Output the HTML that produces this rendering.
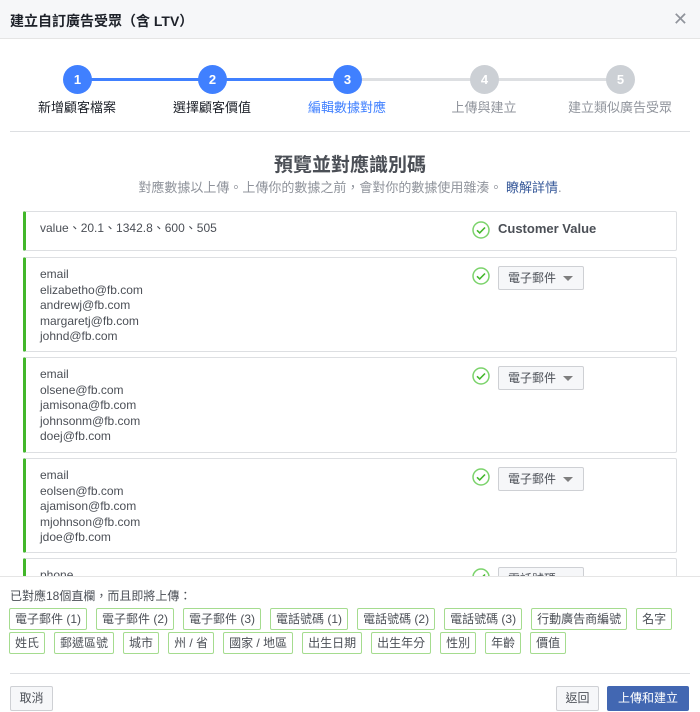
<!DOCTYPE html>
<html><head><meta charset="utf-8"><style>
*{box-sizing:border-box;margin:0;padding:0}
body{width:700px;height:712px;overflow:hidden;background:#fff;font-family:"Liberation Sans","Noto Sans CJK TC",sans-serif;color:#1d2129;position:relative}
.hdr{position:absolute;left:0;top:0;width:700px;height:39px;background:#f6f7f9;border-bottom:1px solid #e5e5e5}
.hdr .t{position:absolute;left:10px;top:11px;font-size:14px;font-weight:bold;color:#1d2129}
.hdr .x{position:absolute;right:12px;top:9px;font-size:18px;color:#90949c}
.line{position:absolute;top:78px;height:3px}
.c{position:absolute;top:65px;width:29px;height:29px;border-radius:50%;color:#fff;font-weight:bold;font-size:13px;text-align:center;line-height:29px}
.lb{position:absolute;top:97px;font-size:13px;width:140px;text-align:center;color:#1d2129}
.div{position:absolute;left:10px;width:680px;height:1px;background:#dddfe2}
h2{position:absolute;top:150px;left:0;width:700px;text-align:center;font-size:19px;font-weight:bold;color:#4b4f56}
.sub{position:absolute;top:177px;left:0;width:700px;text-align:center;font-size:13px;color:#90949c}
.sub a{color:#365899;text-decoration:none}
.scroll{position:absolute;left:0;top:200px;width:700px;height:377px;overflow:hidden;border-bottom:1px solid #e5e5e5}
.card{position:absolute;left:23px;width:654px;border:1px solid #dddfe2;border-left:3px solid #42b72a;border-radius:2px;background:#fff}
.card .tx{position:absolute;left:14px;top:9px;font-size:12px;line-height:15.6px;color:#4b4f56}
.chk{position:absolute;left:446px;top:9px;width:18px;height:18px}
.dd{position:absolute;left:472px;top:8px;height:24px;width:86px;border:1px solid #ced0d4;border-radius:2px;background:#f6f7f9;font-size:12px;color:#4b4f56;line-height:22px;padding-left:9px}
.dd:after{content:"";position:absolute;right:10px;top:9px;border:5px solid transparent;border-top:5px solid #7f7f7f}
.cv{position:absolute;left:472px;top:9px;font-size:13px;font-weight:bold;color:#4b4f56}
.ft{position:absolute;left:10px;top:587px;font-size:12px;color:#4b4f56}
.tags{position:absolute;left:9px;top:608px;width:690px;font-size:12px}
.tag{display:inline-block;border:1px solid #a5dc8f;border-radius:2px;padding:0 5px;height:22px;line-height:20px;color:#4b4f56;margin:0 9px 2px 0;vertical-align:top}
.btn{position:absolute;top:686px;height:25px;border:1px solid #ced0d4;border-radius:2px;background:#f6f7f9;font-size:12px;color:#4b4f56;line-height:23px;text-align:center}
</style></head><body>
<div class="hdr"><div class="t">建立自訂廣告受眾（含 LTV）</div><div class="x">✕</div></div>
<div class="line" style="left:77px;width:270px;background:#4080ff"></div>
<div class="line" style="left:347px;width:273px;background:#dddfe2"></div>
<div class="c" style="left:63px;background:#4080ff">1</div>
<div class="c" style="left:198px;background:#4080ff">2</div>
<div class="c" style="left:333px;background:#4080ff">3</div>
<div class="c" style="left:470px;background:#ccd0d5">4</div>
<div class="c" style="left:606px;background:#ccd0d5">5</div>
<div class="lb" style="left:7px">新增顧客檔案</div>
<div class="lb" style="left:142px">選擇顧客價值</div>
<div class="lb" style="left:277px;color:#4080ff">編輯數據對應</div>
<div class="lb" style="left:414px;color:#90949c">上傳與建立</div>
<div class="lb" style="left:550px;color:#90949c">建立類似廣告受眾</div>
<div class="div" style="top:131px"></div>
<h2>預覽並對應識別碼</h2>
<div class="sub">對應數據以上傳。上傳你的數據之前，會對你的數據使用雜湊。 <a>瞭解詳情</a>.</div>
<div class="scroll">
<div class="card" style="top:11px;height:40px"><div class="tx">value、20.1、1342.8、600、505</div>
<svg class="chk" viewBox="0 0 18 18"><circle cx="9" cy="9" r="8" fill="none" stroke="#7bd36b" stroke-width="1.5"/><path d="M5 9.3l2.7 2.6L13 6.5" fill="none" stroke="#42b72a" stroke-width="1.6"/></svg><div class="cv">Customer Value</div></div>
<div class="card" style="top:57px;height:95px"><div class="tx">email<br>elizabetho@fb.com<br>andrewj@fb.com<br>margaretj@fb.com<br>johnd@fb.com</div>
<svg class="chk" viewBox="0 0 18 18"><circle cx="9" cy="9" r="8" fill="none" stroke="#7bd36b" stroke-width="1.5"/><path d="M5 9.3l2.7 2.6L13 6.5" fill="none" stroke="#42b72a" stroke-width="1.6"/></svg><div class="dd">電子郵件</div></div>
<div class="card" style="top:157px;height:96px"><div class="tx">email<br>olsene@fb.com<br>jamisona@fb.com<br>johnsonm@fb.com<br>doej@fb.com</div>
<svg class="chk" viewBox="0 0 18 18"><circle cx="9" cy="9" r="8" fill="none" stroke="#7bd36b" stroke-width="1.5"/><path d="M5 9.3l2.7 2.6L13 6.5" fill="none" stroke="#42b72a" stroke-width="1.6"/></svg><div class="dd">電子郵件</div></div>
<div class="card" style="top:258px;height:95px"><div class="tx">email<br>eolsen@fb.com<br>ajamison@fb.com<br>mjohnson@fb.com<br>jdoe@fb.com</div>
<svg class="chk" viewBox="0 0 18 18"><circle cx="9" cy="9" r="8" fill="none" stroke="#7bd36b" stroke-width="1.5"/><path d="M5 9.3l2.7 2.6L13 6.5" fill="none" stroke="#42b72a" stroke-width="1.6"/></svg><div class="dd">電子郵件</div></div>
<div class="card" style="top:358px;height:95px"><div class="tx">phone</div>
<svg class="chk" viewBox="0 0 18 18"><circle cx="9" cy="9" r="8" fill="none" stroke="#7bd36b" stroke-width="1.5"/><path d="M5 9.3l2.7 2.6L13 6.5" fill="none" stroke="#42b72a" stroke-width="1.6"/></svg><div class="dd">電話號碼</div></div>
</div>
<div class="ft">已對應18個直欄，而且即將上傳：</div>
<div class="tags"><span class="tag">電子郵件 (1)</span><span class="tag">電子郵件 (2)</span><span class="tag">電子郵件 (3)</span><span class="tag">電話號碼 (1)</span><span class="tag">電話號碼 (2)</span><span class="tag">電話號碼 (3)</span><span class="tag">行動廣告商編號</span><span class="tag">名字</span><br><span class="tag">姓氏</span><span class="tag">郵遞區號</span><span class="tag">城市</span><span class="tag">州 / 省</span><span class="tag">國家 / 地區</span><span class="tag">出生日期</span><span class="tag">出生年分</span><span class="tag">性別</span><span class="tag">年齡</span><span class="tag">價值</span></div>
<div class="div" style="top:673px"></div>
<div class="btn" style="left:10px;width:43px">取消</div>
<div class="btn" style="left:556px;width:43px">返回</div>
<div class="btn" style="left:607px;width:82px;background:#4267b2;border-color:#4267b2;color:#fff">上傳和建立</div>
</body></html>
